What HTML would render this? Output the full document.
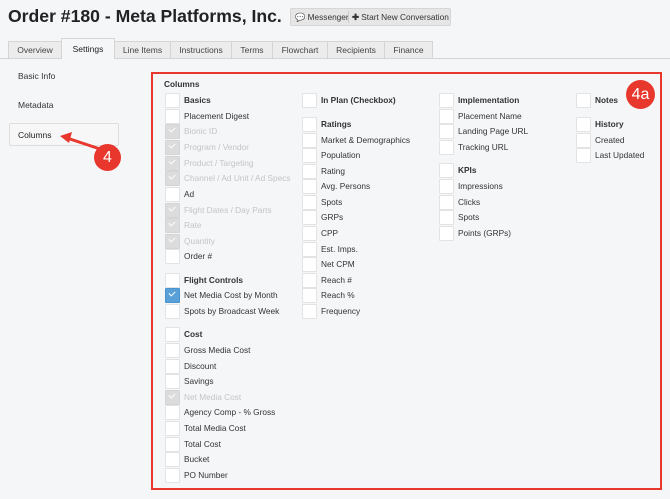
<!DOCTYPE html>
<html><head><meta charset="utf-8"><style>
*{margin:0;padding:0;box-sizing:border-box}
body{width:670px;height:499px;background:#f5f6f8;font-family:"Liberation Sans",Arial,sans-serif;color:#333;position:relative;overflow:hidden}
.a{position:absolute}
h1{position:absolute;left:8px;top:6px;font-size:17.6px;font-weight:bold;color:#222;white-space:nowrap}
.btns{position:absolute;left:290px;top:8px;width:161px;height:18px;background:#e6e6e6;border:1px solid #d6d6d6;border-radius:2px;font-size:8.3px;color:#333;line-height:16px;white-space:nowrap}
.tab{position:absolute;top:41px;height:17px;background:#ececec;border:1px solid #d5d5d5;border-bottom:none;font-size:8.5px;color:#444;text-align:center;line-height:16px}
.tab.act{top:38px;height:21px;background:#f5f6f8;color:#222;line-height:20px}
.line{position:absolute;left:0;top:58px;width:670px;height:1px;background:#d5d5d5}
.side{position:absolute;left:18px;font-size:8.5px;color:#333}
.box{position:absolute;left:151px;top:72px;width:511px;height:418px;border:2px solid #e8372c}
.i{position:absolute;font-size:8.3px;color:#333;white-space:nowrap;line-height:12px}
.i::before{content:"";position:absolute;left:-19px;top:-1px;width:13px;height:13px;background:#fff;border:1px solid #e3e3e3;border-radius:1px}
.h::before{display:none}
.b{font-weight:bold;color:#333}
.d{color:#c4c4c4}
.d::before{background:#dcdcdc;border-color:#d5d5d5}
.d::after,.c::after{content:"";position:absolute;left:-15px;top:2px;width:5px;height:3px;border-left:1.5px solid #fff;border-bottom:1.5px solid #fff;transform:rotate(-45deg)}
.c::before{background:#5aa0d8;border-color:#4b93cc}
.badge{position:absolute;border-radius:50%;background:#e8372c;color:#fff;text-align:center;font-size:16px}
</style></head><body>
<h1>Order #180 - Meta Platforms, Inc.</h1>
<div class="btns"><span style="position:absolute;left:4px">💬 Messenger</span><span style="position:absolute;left:57px;top:2px;width:1px;height:12px;background:#ccc"></span><span style="position:absolute;left:61px"><b>✚</b> Start New Conversation</span></div>
<div class="line"></div>
<div class="tab" style="left:8px;width:54px">Overview</div>
<div class="tab act" style="left:61px;width:54px">Settings</div>
<div class="tab" style="left:114px;width:57px">Line Items</div>
<div class="tab" style="left:170px;width:62px">Instructions</div>
<div class="tab" style="left:231px;width:42px">Terms</div>
<div class="tab" style="left:272px;width:56px">Flowchart</div>
<div class="tab" style="left:327px;width:58px">Recipients</div>
<div class="tab" style="left:384px;width:49px">Finance</div>
<div class="side" style="top:71px">Basic Info</div>
<div class="side" style="top:100px">Metadata</div>
<div class="a" style="left:9px;top:123px;width:110px;height:23px;border:1px solid #ddd;border-radius:2px;background:#f7f7f7"></div>
<div class="side" style="top:130px;color:#222">Columns</div>
<svg class="a" style="left:55px;top:128px" width="60" height="30"><line x1="48" y1="22" x2="12" y2="10" stroke="#e8372c" stroke-width="3"/><polygon points="5,8 17,4 14,15" fill="#e8372c"/></svg>
<div class="badge" style="left:94px;top:144px;width:27px;height:27px;line-height:27px">4</div>
<div class="box"></div>
<div class="badge" style="left:626px;top:80px;width:29px;height:29px;line-height:29px">4a</div>
<div class="i b h" style="left:164px;top:78px">Columns</div>

<div class="i b" style="left:184px;top:94px">Basics</div>
<div class="i" style="left:184px;top:110px">Placement Digest</div>
<div class="i d" style="left:184px;top:125px">Bionic ID</div>
<div class="i d" style="left:184px;top:141px">Program / Vendor</div>
<div class="i d" style="left:184px;top:157px">Product / Targeting</div>
<div class="i d" style="left:184px;top:172px">Channel / Ad Unit / Ad Specs</div>
<div class="i" style="left:184px;top:188px">Ad</div>
<div class="i d" style="left:184px;top:204px">Flight Dates / Day Parts</div>
<div class="i d" style="left:184px;top:219px">Rate</div>
<div class="i d" style="left:184px;top:235px">Quantity</div>
<div class="i" style="left:184px;top:250px">Order #</div>
<div class="i b" style="left:184px;top:274px">Flight Controls</div>
<div class="i c" style="left:184px;top:289px">Net Media Cost by Month</div>
<div class="i" style="left:184px;top:305px">Spots by Broadcast Week</div>
<div class="i b" style="left:184px;top:328px">Cost</div>
<div class="i" style="left:184px;top:344px">Gross Media Cost</div>
<div class="i" style="left:184px;top:360px">Discount</div>
<div class="i" style="left:184px;top:375px">Savings</div>
<div class="i d" style="left:184px;top:391px">Net Media Cost</div>
<div class="i" style="left:184px;top:406px">Agency Comp - % Gross</div>
<div class="i" style="left:184px;top:422px">Total Media Cost</div>
<div class="i" style="left:184px;top:438px">Total Cost</div>
<div class="i" style="left:184px;top:453px">Bucket</div>
<div class="i" style="left:184px;top:469px">PO Number</div>

<div class="i b" style="left:321px;top:94px">In Plan (Checkbox)</div>
<div class="i b" style="left:321px;top:118px">Ratings</div>
<div class="i" style="left:321px;top:134px">Market &amp; Demographics</div>
<div class="i" style="left:321px;top:149px">Population</div>
<div class="i" style="left:321px;top:165px">Rating</div>
<div class="i" style="left:321px;top:180px">Avg. Persons</div>
<div class="i" style="left:321px;top:196px">Spots</div>
<div class="i" style="left:321px;top:211px">GRPs</div>
<div class="i" style="left:321px;top:227px">CPP</div>
<div class="i" style="left:321px;top:243px">Est. Imps.</div>
<div class="i" style="left:321px;top:258px">Net CPM</div>
<div class="i" style="left:321px;top:274px">Reach #</div>
<div class="i" style="left:321px;top:289px">Reach %</div>
<div class="i" style="left:321px;top:305px">Frequency</div>

<div class="i b" style="left:458px;top:94px">Implementation</div>
<div class="i" style="left:458px;top:110px">Placement Name</div>
<div class="i" style="left:458px;top:125px">Landing Page URL</div>
<div class="i" style="left:458px;top:141px">Tracking URL</div>
<div class="i b" style="left:458px;top:164px">KPIs</div>
<div class="i" style="left:458px;top:180px">Impressions</div>
<div class="i" style="left:458px;top:196px">Clicks</div>
<div class="i" style="left:458px;top:211px">Spots</div>
<div class="i" style="left:458px;top:227px">Points (GRPs)</div>

<div class="i b" style="left:595px;top:94px">Notes</div>
<div class="i b" style="left:595px;top:118px">History</div>
<div class="i" style="left:595px;top:134px">Created</div>
<div class="i" style="left:595px;top:149px">Last Updated</div>
</body></html>
